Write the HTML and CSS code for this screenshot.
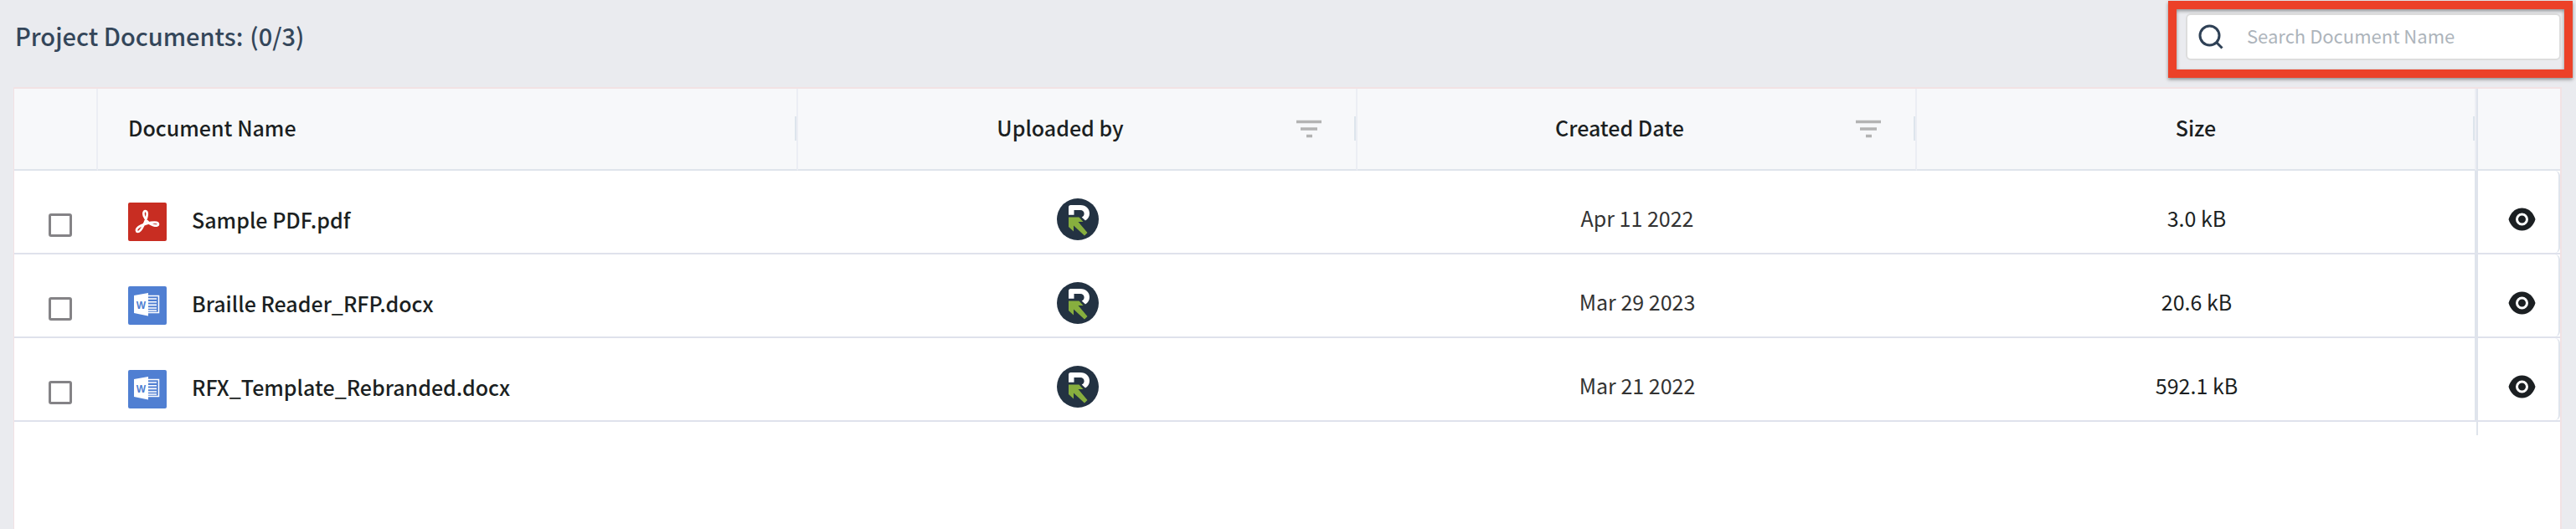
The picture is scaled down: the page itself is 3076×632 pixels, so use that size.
FILE: index.html
```html
<!DOCTYPE html>
<html lang="en">
<head>
<meta charset="utf-8">
<meta name="viewport" content="width=device-width, initial-scale=1">
<title>Project Documents</title>
<link rel="stylesheet" href="styles.css">
</head>
<body>
<svg class="sprite" aria-hidden="true">
  <symbol id="pdf" viewBox="0 0 46 46">
    <rect width="46" height="46" rx="2" fill="#c82d22"/>
    <path d="M20.500 10c-2.400.2-2.500 3.600-1.400 6.400 1.100 3 3.300 6.200 6 8.200 3 2.200 7.500 3.500 9.500 2.800 2-.6 1.800-3-.6-3.500-3-.6-8 .2-12 1.200-4.300 1.200-8.500 2.600-11 5.500-1.600 1.900-1.200 4.200.6 4.400 2.200.2 4.800-4 6.700-7.900 2-4 4.200-9.400 4.400-13 .1-2.300-.6-4.200-2.200-4.100z" fill="none" stroke="#fff" stroke-width="2.700" stroke-linejoin="round"/>
  </symbol>
  <symbol id="word" viewBox="0 0 46 46">
    <rect width="46" height="46" rx="2" fill="#507fd2"/>
    <path d="M22 11.500h14.500v20H22" fill="none" stroke="#fff" stroke-width="1.500"/>
    <path d="M22 15h12M22 18.700h12M22 22.400h12M22 26h12M22 29h12" stroke="#fff" stroke-width="1.600"/>
    <path d="M7 11l17-3v27.500L7 32z" fill="#fff"/>
    <text x="15.500" y="27" text-anchor="middle" class="word-letter">W</text>
  </symbol>
  <symbol id="brand" viewBox="0 0 50 50">
    <circle cx="25" cy="25" r="25" fill="#233242"/>
    <path d="M14 19.700V10.500Q14 8 16.500 8H28C35 8 39 12.500 39 18c0 3.800-2 6.700-5 8.500l-4.300-4c2-.8 2.900-2.300 2.900-4.200 0-2.500-1.800-4.300-4.600-4.300h-7.500v5.700z" fill="#fff"/>
    <path d="M14 22.500h12.500l5 5.500h-6l11 13-3.500 3.500-13-12v7L14 34z" fill="#87ae3e"/>
  </symbol>
  <symbol id="eye" viewBox="0 0 32 28">
    <path d="M16 .5C24 .5 29.500 6 32 14c-2.500 8-8 13.500-16 13.500S2.500 22 0 14C2.500 6 8 .5 16 .5z" fill="#1b1f22"/>
    <circle cx="16" cy="14" r="6" fill="#1b1f22" stroke="#fff" stroke-width="3"/>
  </symbol>
  <symbol id="filter" viewBox="0 0 32 22">
    <path d="M1 2.500h30M6 11h20M13 19.500h7" stroke="#b3b3b3" stroke-width="3.500"/>
  </symbol>
</svg>

<header class="topbar">
  <h1 class="title"><span>Project Documents:</span><span>(0/3)</span></h1>
  <div class="search">
    <svg class="search-icon" viewBox="0 0 30 30" aria-hidden="true"><circle cx="13.500" cy="13.500" r="11.500"/><path d="M21.500 21.500l7 7"/></svg>
    <input class="search-input" type="text" placeholder="Search Document Name" aria-label="Search Document Name">
    <div class="highlight"></div>
  </div>
</header>

<main class="panel">
  <table class="docs">
    <colgroup><col class="col-side"><col class="col-name"><col><col><col><col class="col-side"></colgroup>
    <thead>
      <tr>
        <th></th>
        <th class="resizable"><div class="head head-name"><span class="head-label">Document Name</span></div></th>
        <th class="resizable"><div class="head"><span class="head-label">Uploaded by</span><button class="icon-button" aria-label="Filter by uploader"><svg class="filter-icon"><use href="#filter"/></svg></button></div></th>
        <th class="resizable"><div class="head"><span class="head-label">Created Date</span><button class="icon-button" aria-label="Filter by date"><svg class="filter-icon"><use href="#filter"/></svg></button></div></th>
        <th class="resizable"><div class="head"><span class="head-label">Size</span></div></th>
        <th class="head-action"></th>
      </tr>
    </thead>
    <tbody>
      <tr>
        <td class="pick"><input class="check" type="checkbox" aria-label="Select Sample PDF.pdf"></td>
        <td><div class="file"><svg class="file-icon"><use href="#pdf"/></svg><span class="file-name">Sample PDF.pdf</span></div></td>
        <td><svg class="avatar"><use href="#brand"/></svg></td>
        <td class="date">Apr 11 2022</td>
        <td class="size">3.0 kB</td>
        <td class="action"><div class="action-box"><button class="icon-button" aria-label="View Sample PDF.pdf"><svg class="eye-icon"><use href="#eye"/></svg></button></div></td>
      </tr>
      <tr>
        <td class="pick"><input class="check" type="checkbox" aria-label="Select Braille Reader_RFP.docx"></td>
        <td><div class="file"><svg class="file-icon"><use href="#word"/></svg><span class="file-name">Braille Reader_RFP.docx</span></div></td>
        <td><svg class="avatar"><use href="#brand"/></svg></td>
        <td class="date">Mar 29 2023</td>
        <td class="size">20.6 kB</td>
        <td class="action"><div class="action-box"><button class="icon-button" aria-label="View Braille Reader_RFP.docx"><svg class="eye-icon"><use href="#eye"/></svg></button></div></td>
      </tr>
      <tr>
        <td class="pick"><input class="check" type="checkbox" aria-label="Select RFX_Template_Rebranded.docx"></td>
        <td><div class="file"><svg class="file-icon"><use href="#word"/></svg><span class="file-name">RFX_Template_Rebranded.docx</span></div></td>
        <td><svg class="avatar"><use href="#brand"/></svg></td>
        <td class="date">Mar 21 2022</td>
        <td class="size">592.1 kB</td>
        <td class="action"><div class="action-box"><button class="icon-button" aria-label="View RFX_Template_Rebranded.docx"><svg class="eye-icon"><use href="#eye"/></svg></button></div></td>
      </tr>
    </tbody>
  </table>
  <div class="pinned-edge"></div>
</main>
</body>
</html>
```

FILE: styles.css
```css
* { box-sizing: border-box; }

body {
  margin: 0;
  min-height: 100vh;
  display: flex;
  flex-direction: column;
  background: #eaebef;
  color: #1b1f22;
  font-family: "Noto Sans CJK SC", "Noto Sans", sans-serif;
  font-size: 25px;
  line-height: 36px;
}

.sprite { display: none; }

.word-letter {
  fill: #507fd2;
  font: bold 12px "Liberation Sans", sans-serif;
}

.topbar {
  display: flex;
  justify-content: space-between;
  align-items: flex-start;
  padding: 16px 18px 32px;
}

.title {
  display: flex;
  gap: 8px;
  margin: 0;
  padding-top: 6px;
  color: #34465a;
  font-size: 29px;
  line-height: 40px;
  font-weight: 500;
}

.search {
  position: relative;
  display: flex;
  align-items: center;
  gap: 28px;
  width: 448px;
  height: 56px;
  padding: 0 14px 0 13px;
  border: 2px solid #dddddd;
  border-radius: 6px;
  background: #fff;
}

.search-icon {
  flex: none;
  width: 30px;
  height: 30px;
  fill: none;
  stroke: #2f4156;
  stroke-width: 3;
}

.search-input {
  flex: 1;
  min-width: 0;
  padding: 0 0 4px;
  border: 0;
  outline: 0;
  background: transparent;
  font: inherit;
  font-size: 22px;
}

.search-input::placeholder { color: #adb4bb; opacity: 1; }

.highlight {
  position: absolute;
  inset: -17px -16px -23px -23px;
  border: 10px solid #ec4128;
  box-shadow: 0 2px 4px rgba(0, 0, 0, .4), inset 0 2px 4px rgba(0, 0, 0, .4);
  pointer-events: none;
}

.panel {
  flex: 1;
  margin: 0 17px 0 16px;
  border: 2px solid #f2e2e4;
  border-width: 2px 2px 0 1px;
  background: #fff;
}

.docs {
  width: 100%;
  table-layout: fixed;
  border-collapse: separate;
  border-spacing: 0;
}

.col-side { width: 100px; }
.col-name { width: 27.5%; }

th {
  position: relative;
  height: 98px;
  padding: 0;
  background: #f7f8fa;
  border-right: 2px solid #eceef4;
  border-bottom: 2px solid #dfe4ec;
  font-weight: 500;
}

.resizable::after {
  content: "";
  position: absolute;
  top: 33px;
  right: 0;
  width: 2px;
  height: 29px;
  background: #dde5ec;
}

.head {
  display: flex;
  align-items: center;
  gap: 8px;
  padding: 0 40px;
}

.head-name { padding-left: 36px; text-align: left; }
.head-label { flex: 1; padding-bottom: 4px; }

.head-action {
  border-left: 2px solid #dfe4ec;
  border-right: 0;
}

td {
  height: 100px;
  padding: 14px 0 0;
  border-bottom: 2px solid #dfe2ec;
  text-align: center;
  vertical-align: middle;
}

.icon-button {
  display: block;
  padding: 0;
  border: 0;
  background: none;
}

.filter-icon { display: block; width: 32px; height: 22px; }
.eye-icon { display: block; width: 33px; height: 28px; }

td.pick { padding: 32px 0 0 10px; line-height: 0; }

.check {
  appearance: none;
  width: 28px;
  height: 28px;
  margin: 0;
  border: 3px solid #848386;
  border-radius: 3px;
  background: #fff;
}

.file {
  display: flex;
  align-items: center;
  gap: 30px;
  padding: 10px 0 0 36px;
  font-weight: 500;
}

.file-name { padding-bottom: 6px; }
.file-icon { width: 46px; height: 46px; }
.avatar { display: block; width: 50px; height: 50px; margin: 4px auto 0; }
.date { color: #333; }
.size { padding-left: 2px; border-right: 2px solid #dfe4ec; }

td.action { padding: 0; border-left: 2px solid #dfe4ec; }

.action-box {
  display: flex;
  align-items: center;
  justify-content: center;
  height: 98px;
  padding: 18px 0 0 8px;
  border-right: 2px solid #dfe4ec;
  border-radius: 6px;
}

.pinned-edge {
  width: 100px;
  height: 16px;
  margin-left: auto;
  border-left: 2px solid #dfe4ec;
}
```
